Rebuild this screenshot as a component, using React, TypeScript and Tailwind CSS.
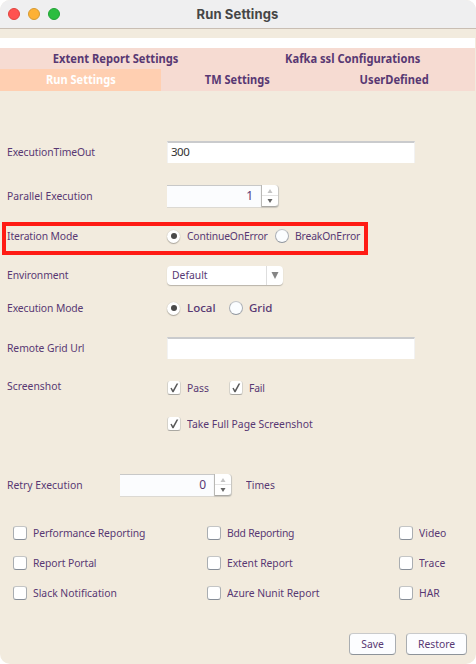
import type { ReactNode } from 'react';

const TEXT = 'block whitespace-nowrap text-[11.5px] leading-[16px]';

function Label({ children, className = '' }: { children: ReactNode; className?: string }) {
  return <span className={`${TEXT} origin-left scale-x-90 ${className}`}>{children}</span>;
}

function FieldLabel({ children, className = '' }: { children: ReactNode; className?: string }) {
  return (
    <div className="flex w-[160px] shrink-0">
      <Label className={className}>{children}</Label>
    </div>
  );
}

function TextField({ value }: { value: string }) {
  return (
    <div className="flex h-[22px] w-[248px] items-center border-x border-t-2 border-x-[#f2f2f2] border-t-[#cacbcd] bg-white pb-[2px] pl-[3px]">
      <span className="text-[11.5px] leading-4 tracking-[-0.5px] text-[#333]">{value}</span>
    </div>
  );
}

function Spinner({ value }: { value: string }) {
  return (
    <div className="flex h-[23px] w-[112px]">
      <div className="flex h-[23px] w-[94px] items-center justify-end border-y border-b-[#dcd9d3] border-t-[#c8c8c8] bg-[#fbfcfe] pb-px pr-[8px]">
        <span className="text-[12px] leading-4">{value}</span>
      </div>
      <div className="flex h-[22px] w-[18px] flex-col rounded-r-[4px] border-b border-l border-r border-b-[#aaa9a5] border-l-[#b9b8b5] border-r-[#c9c7c2] bg-white shadow-[0_1px_1px_#c9c5bc]">
        <div className="flex h-[11px] items-end justify-center border-b border-[#e3e3e3] pb-[2px]">
          <svg width="6" height="4" viewBox="0 0 6 4"><path d="M3 0L5.5 4H.5z" fill="#c4c4c4" /></svg>
        </div>
        <div className="flex flex-1 items-center justify-center">
          <svg width="6" height="4" viewBox="0 0 6 4"><path d="M.5 0H5.5L3 4z" fill="#666" /></svg>
        </div>
      </div>
    </div>
  );
}

function Radio({ on = false }: { on?: boolean }) {
  return on ? (
    <span className="mr-px flex size-[13px] shrink-0 items-center justify-center rounded-full bg-white shadow-[0_1px_1px_#aaa59b,0_0_1px_#bbb6ac]">
      <span className="size-[6px] rounded-full bg-[#4a4a4a]" />
    </span>
  ) : (
    <span className="size-[14px] shrink-0 rounded-full border border-b-[#8f959d] border-l-[#a9adb3] border-r-[#a9adb3] border-t-[#c3c6c9] bg-[#fbfdff]" />
  );
}

function Check({ on = false }: { on?: boolean }) {
  return on ? (
    <span className="flex h-[14px] w-[14px] shrink-0 items-center justify-center rounded-[3px] border-x border-b border-x-[#d5d2ca] border-b-[#aaa8a2] bg-white">
      <svg width="12" height="12" viewBox="0 0 12 12" fill="none">
        <path d="M2.4 6.2L3.6 5.7L5 8L8.6 1.5H10.3L5.6 10.3H4.4z" fill="#5a5a5a" />
      </svg>
    </span>
  ) : (
    <span className="h-[14px] w-[14px] shrink-0 rounded-[3px] border border-b-[#878e98] border-l-[#a9adb1] border-r-[#a9adb1] border-t-[#c4c5c5] bg-white" />
  );
}

function Option({ text, className = '' }: { text: string; className?: string }) {
  return (
    <div className="flex h-5 items-center gap-[6px]">
      <Check />
      <Label className={className}>{text}</Label>
    </div>
  );
}

const BUTTON =
  'flex h-[22px] items-center justify-center rounded-[4px] border border-b-[#8d939a] border-l-[#a9adb1] border-r-[#a9adb1] border-t-[#c9cacb] bg-[#fcfdff]';

export default function App() {
  return (
    <div className="h-[664px] w-[476px] overflow-hidden bg-white">
      <div className="flex h-[664px] w-[476px] flex-col overflow-hidden rounded-[10px] bg-[#f2ebde] font-['Noto_Sans',sans-serif] text-[#583873]">
        <header className="grid h-[29px] shrink-0 grid-cols-[1fr_auto_1fr] items-center border-b border-[#c9beb3] bg-[#efeff0]">
          <div className="flex gap-2 pl-2">
            <span className="size-3 rounded-full border border-[#e0443e] bg-[#ff5250]" />
            <span className="size-3 rounded-full border border-[#d69a32] bg-[#fdb135]" />
            <span className="size-3 rounded-full border border-[#21a335] bg-[#2bbd40]" />
          </div>
          <h1 className="font-['Inter',sans-serif] pr-[1px] text-[13px] font-bold leading-4 tracking-[0.15px] text-[#464646]">Run Settings</h1>
        </header>
        <div className="mt-[9px] h-[10px] w-[475px] shrink-0 bg-white" />
        <nav className="w-[475px] shrink-0 bg-[#f6dbd2] text-[12px] font-bold leading-4">
          <div className="flex h-[21px] items-center">
            <div className="flex w-[231px] justify-center"><span className="scale-x-[0.93]">Extent Report Settings</span></div>
            <div className="flex flex-1 justify-center"><span className="scale-x-[0.93]">Kafka ssl Configurations</span></div>
          </div>
          <div className="flex h-[22px] items-center">
            <div className="flex h-[22px] w-[161px] items-center justify-center bg-[#ffcfb1] text-white"><span className="scale-x-[0.92]">Run Settings</span></div>
            <div className="flex w-[153px] justify-center"><span className="scale-x-[0.92]">TM Settings</span></div>
            <div className="flex flex-1 justify-center"><span className="scale-x-[0.93]">UserDefined</span></div>
          </div>
        </nav>

        <main className="flex flex-col">
          <div className="mt-[50px] flex h-[22px] items-center pl-[7px]">
            <FieldLabel className="tracking-[-0.1px]">ExecutionTimeOut</FieldLabel>
            <TextField value="300" />
          </div>
          <div className="mt-[22px] flex h-[23px] items-center pl-[7px]">
            <FieldLabel className="pb-px">Parallel Execution</FieldLabel>
            <Spinner value="1" />
          </div>
          <div className="ml-[2px] mt-[14px] flex h-[33px] w-[366px] items-center border-4 border-[#ff1b14] pb-[5px] pl-[1px]">
            <FieldLabel className="tracking-[-0.13px]">Iteration Mode</FieldLabel>
            <Radio on />
            <div className="ml-[6px] w-[88px]"><Label className="tracking-[-0.2px]">ContinueOnError</Label></div>
            <Radio />
            <Label className="ml-[6px] tracking-[-0.18px]">BreakOnError</Label>
          </div>
          <div className="mt-[10px] flex h-[20px] items-center pl-[7px]">
            <FieldLabel className="tracking-[-0.1px]">Environment</FieldLabel>
            <div className="flex h-[19px] w-[116px] rounded-[4px] bg-white shadow-[0_1px_1px_#b8b3a9]">
              <div className="flex w-[100px] items-center border-r border-[#dedede] pl-[5px]"><Label>Default</Label></div>
              <div className="flex flex-1 items-center justify-center">
                <svg width="8" height="7" viewBox="0 0 8 7"><path d="M.5 0H7.5L4 7z" fill="#858585" /></svg>
              </div>
            </div>
          </div>
          <div className="mt-[13px] flex h-5 items-center pl-[7px]">
            <FieldLabel className="tracking-[-0.12px]">Execution Mode</FieldLabel>
            <Radio on />
            <div className="ml-[6px] w-[42px]"><span className={`${TEXT} font-medium`}>Local</span></div>
            <Radio />
            <span className={`${TEXT} ml-[6px] font-medium`}>Grid</span>
          </div>
          <div className="mt-[19px] flex h-[22px] items-center pl-[7px]">
            <FieldLabel className="tracking-[-0.08px]">Remote Grid Url</FieldLabel>
            <TextField value="" />
          </div>
          <div className="mt-[19px] flex h-5 items-center pl-[7px]">
            <FieldLabel className="pb-1">Screenshot</FieldLabel>
            <Check on />
            <div className="ml-[6px] w-[42px]"><Label>Pass</Label></div>
            <Check on />
            <Label className="ml-[6px] tracking-[-0.2px]">Fail</Label>
          </div>
          <div className="mt-[16px] flex h-5 items-center pl-[167px]">
            <Check on />
            <Label className="ml-[6px]">Take Full Page Screenshot</Label>
          </div>
          <div className="mt-[40px] flex h-[23px] items-center pl-[7px]">
            <div className="flex w-[113px]"><Label className="pb-px">Retry Execution</Label></div>
            <Spinner value="0" />
            <Label className="ml-[14px] pb-px">Times</Label>
          </div>
          <div className="mt-[26px] grid grid-cols-[194px_192px_1fr] gap-y-[10px] pl-[13px]">
            <Option text="Performance Reporting" className="tracking-[-0.1px]" />
            <Option text="Bdd Reporting" className="tracking-[-0.28px]" />
            <Option text="Video" />
            <Option text="Report Portal" className="tracking-[-0.1px]" />
            <Option text="Extent Report" className="tracking-[-0.07px]" />
            <Option text="Trace" className="tracking-[0.1px]" />
            <Option text="Slack Notification" />
            <Option text="Azure Nunit Report" className="tracking-[-0.05px]" />
            <Option text="HAR" />
          </div>
          <div className="mt-[30px] flex justify-end gap-[10px] pr-[9px]">
            <button className={`${BUTTON} w-[47px]`}><span className={`${TEXT} scale-x-90`}>Save</span></button>
            <button className={`${BUTTON} w-[61px]`}><span className={`${TEXT} scale-x-90`}>Restore</span></button>
          </div>
        </main>
      </div>
    </div>
  );
}
